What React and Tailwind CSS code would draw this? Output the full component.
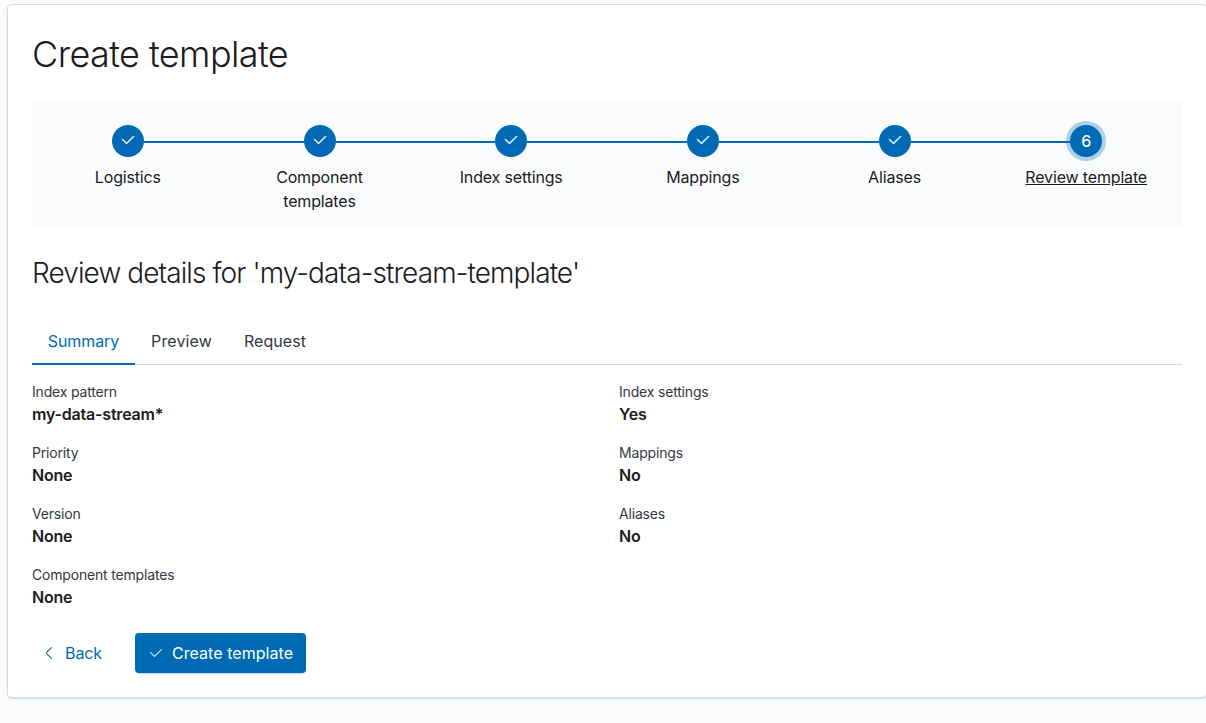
const STEPS = ['Logistics', 'Component templates', 'Index settings', 'Mappings', 'Aliases', 'Review template'];

const LEFT = [
  ['Index pattern', 'my-data-stream*'],
  ['Priority', 'None'],
  ['Version', 'None'],
  ['Component templates', 'None'],
];

const RIGHT = [
  ['Index settings', 'Yes'],
  ['Mappings', 'No'],
  ['Aliases', 'No'],
];

function CheckIcon({ className = '', bold = false }) {
  return (
    <svg
      viewBox="0 0 16 16"
      className={`h-4 w-4 fill-current ${className}`}
      stroke={bold ? 'currentColor' : 'none'}
      strokeWidth="0.5"
      aria-hidden="true"
    >
      <path d="M6.5 12a.502.502 0 01-.354-.146l-4-4a.502.502 0 01.708-.708L6.5 10.793l6.646-6.647a.502.502 0 01.708.708l-7 7A.502.502 0 016.5 12" />
    </svg>
  );
}

function ArrowLeftIcon() {
  return (
    <svg viewBox="0 0 16 16" className="h-4 w-4 fill-current" aria-hidden="true">
      <path d="M10.843 13.069L6.232 8.384a.546.546 0 010-.768l4.61-4.685a.552.552 0 000-.771.53.53 0 00-.759 0l-4.61 4.684a1.65 1.65 0 000 2.312l4.61 4.684a.53.53 0 00.76 0 .552.552 0 000-.771z" />
    </svg>
  );
}

function Step({ label, index }) {
  const first = index === 0;
  const last = index === STEPS.length - 1;
  return (
    <li className="flex flex-1 flex-col items-center">
      <div className="flex w-full items-center">
        <span className={`mt-px h-0.5 flex-1 ${first ? '' : 'bg-[#006bb4]'}`} />
        <span
          className={`flex h-8 w-8 items-center justify-center rounded-full bg-[#006bb4] font-medium text-white ${
            last ? 'ring-4 ring-[#006bb4]/30' : ''
          }`}
        >
          {last ? '6' : <CheckIcon bold className="-mt-0.5" />}
        </span>
        <span className={`mt-px h-0.5 flex-1 ${last ? '' : 'bg-[#006bb4]'}`} />
      </div>
      <span className={`mt-2 px-4 text-center leading-6 tracking-[-0.16px] ${last ? 'underline whitespace-nowrap' : ''}`}>
        {label}
      </span>
    </li>
  );
}

function Details({ items }) {
  return (
    <dl className="flex-1">
      {items.map(([term, value]) => (
        <div key={term} className="h-[61px]">
          <dt className="text-sm leading-[21px] tracking-[-0.18px] text-[#343741]">{term}</dt>
          <dd className="font-semibold leading-6 tracking-[-0.2px]">{value}</dd>
        </div>
      ))}
    </dl>
  );
}

export default function App() {
  return (
    <div className="h-[723px] overflow-hidden bg-[#fafbfd] pl-[7px] pt-1 font-['Inter',sans-serif] text-base tracking-[-0.005em] text-[#1a1c21]">
      <main className="h-[694px] w-[1200px] rounded border border-[#d3dae6] bg-white px-6 pt-6 shadow-[0_2px_2px_-1px_rgba(152,162,179,0.3)]">
        <h1 className="mt-px h-[71px] text-[36px] font-light leading-[48px] tracking-[-0.58px]">Create template</h1>

        <ol className="flex h-32 bg-[#fafbfd] pt-6">
          {STEPS.map((label, i) => (
            <Step key={label} label={label} index={i} />
          ))}
        </ol>

        <h2 className="mt-6 text-[28px] font-light leading-10 tracking-[-0.9px]">
          Review details for 'my-data-stream-template'
        </h2>

        <nav className="mt-6 flex h-12 text-[#343741] shadow-[inset_0_-1px_0_#d3dae6]">
          <button className="w-[103px] border-b-2 border-[#006bb4] pt-0.5 text-[#006bb4]">Summary</button>
          <button className="w-[93px] border-b-2 border-transparent pt-0.5 tracking-[0.12px]">Preview</button>
          <button className="w-[94px] border-b-2 border-transparent pt-0.5 tracking-[0.08px]">Request</button>
        </nav>

        <div className="mt-4 flex h-[252px] gap-6">
          <Details items={LEFT} />
          <Details items={RIGHT} />
        </div>

        <div className="flex h-10 items-center">
          <button className="flex h-10 w-[87px] items-center gap-2 pl-[9px] text-[#006bb4]">
            <ArrowLeftIcon />
            Back
          </button>
          <button className="ml-4 flex h-10 w-[171px] items-center justify-center gap-2 rounded bg-[#006bb4] tracking-[0.05px] text-white shadow-[0_2px_2px_-1px_rgba(54,97,126,0.3)]">
            <CheckIcon />
            Create template
          </button>
        </div>
      </main>
    </div>
  );
}
